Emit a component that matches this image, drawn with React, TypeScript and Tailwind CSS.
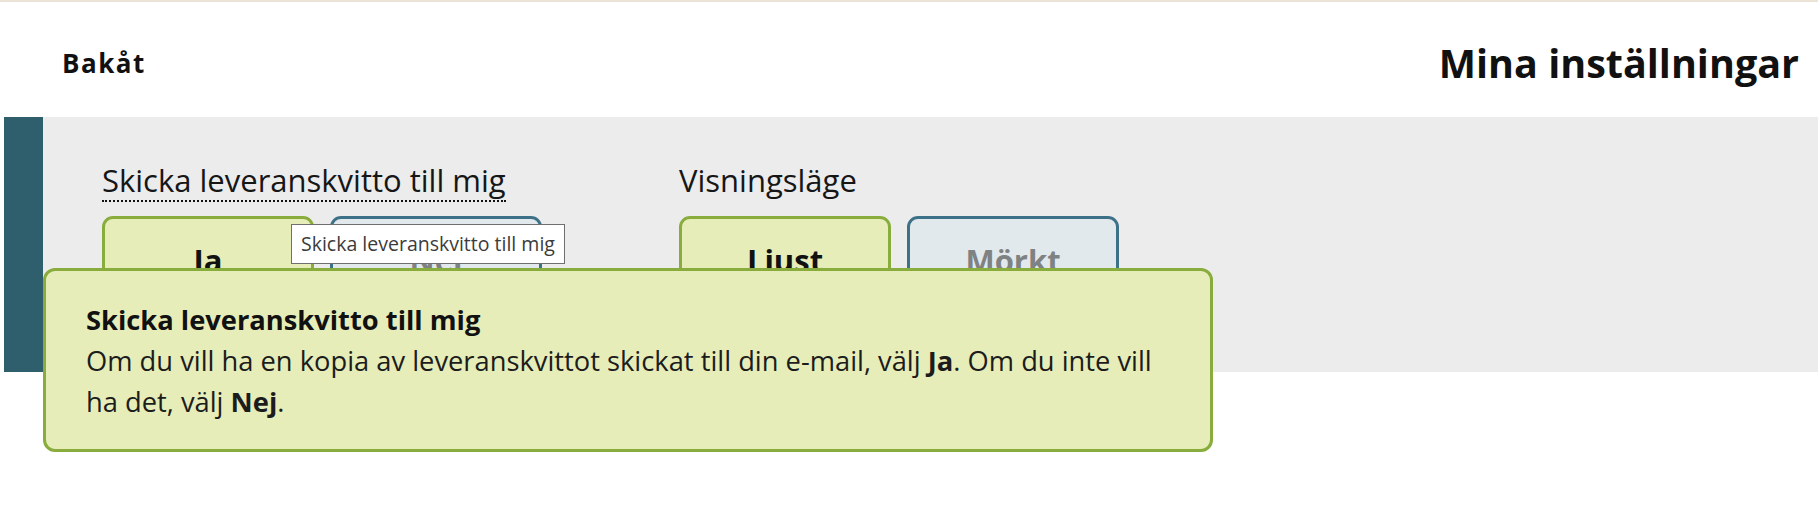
import React from "react";

const Choice = ({ label, active }: { label: string; active: boolean }) => (
    <div
        className={
            active
                ? "w-[212px] h-[89px] flex items-center justify-center rounded-[11px] border-[3px] border-[#89ad3c] bg-[#e6edb8] text-[31px] font-bold text-[#111]"
                : "w-[212px] h-[89px] flex items-center justify-center rounded-[11px] border-[3px] border-[#3d7188] bg-[#e2e9ec] text-[31px] font-bold text-[#7f8283]"
        }
    >
        {label}
    </div>
);

const Setting = ({ title, options, underline }: { title: string; options: [string, boolean][]; underline?: boolean }) => (
    <div className="w-[577px] flex flex-col">
        <div className="flex">
            <span
                className={
                    underline
                        ? "text-[31px] leading-[40px] text-[#161616] border-b-2 border-dotted border-[#111]"
                        : "text-[31px] leading-[40px] text-[#161616] border-b-2 border-transparent"
                }
            >
                {title}
            </span>
        </div>
        <div className="flex gap-[16px] mt-[14px]">
            {options.map(([label, active]) => (
                <Choice key={label} label={label} active={active} />
            ))}
        </div>
    </div>
);

export default function App() {
    return (
        <div className="relative w-[1818px] h-[514px] bg-white font-['Open_Sans',sans-serif] overflow-hidden">
            <header className="h-[117px] border-t-2 border-[#ebe4d6] pt-[8px] pl-[62px] pr-[19px] flex items-center justify-between">
                <a className="text-[26px] font-bold tracking-[1.5px] text-[#111]">Bakåt</a>
                <h1 className="text-[39.5px] font-bold text-[#111]">Mina inställningar</h1>
            </header>

            <section className="ml-[4px] h-[255px] flex bg-[#ececec]">
                <div className="w-[39px] bg-[#2f5e6d]" />
                <div className="flex pl-[59px] pt-[43px]">
                    <Setting
                        title="Skicka leveranskvitto till mig"
                        underline
                        options={[
                            ["Ja", true],
                            ["Nej", false],
                        ]}
                    />
                    <Setting
                        title="Visningsläge"
                        options={[
                            ["Ljust", true],
                            ["Mörkt", false],
                        ]}
                    />
                </div>
            </section>

            {/* native title tooltip */}
            <div className="absolute left-[291px] top-[224px] h-[40px] px-[9px] flex items-center bg-white border border-[#6f6f6f] text-[19.5px] text-[#3b3b3b]">
                Skicka leveranskvitto till mig
            </div>

            {/* help popover */}
            <div className="absolute left-[43px] top-[268px] w-[1170px] rounded-[12px] border-[3px] border-[#89ad3c] bg-[#e6edb8] pt-[28px] pb-[27px] pl-[40px] pr-[40px] text-[27.3px] leading-[41px] text-[#1c1c1c]">
                <p className="font-bold text-[#111]">Skicka leveranskvitto till mig</p>
                <p>
                    Om du vill ha en kopia av leveranskvittot skickat till din e-mail, välj <b>Ja</b>. Om du inte vill ha det, välj <b>Nej</b>.
                </p>
            </div>
        </div>
    );
}
